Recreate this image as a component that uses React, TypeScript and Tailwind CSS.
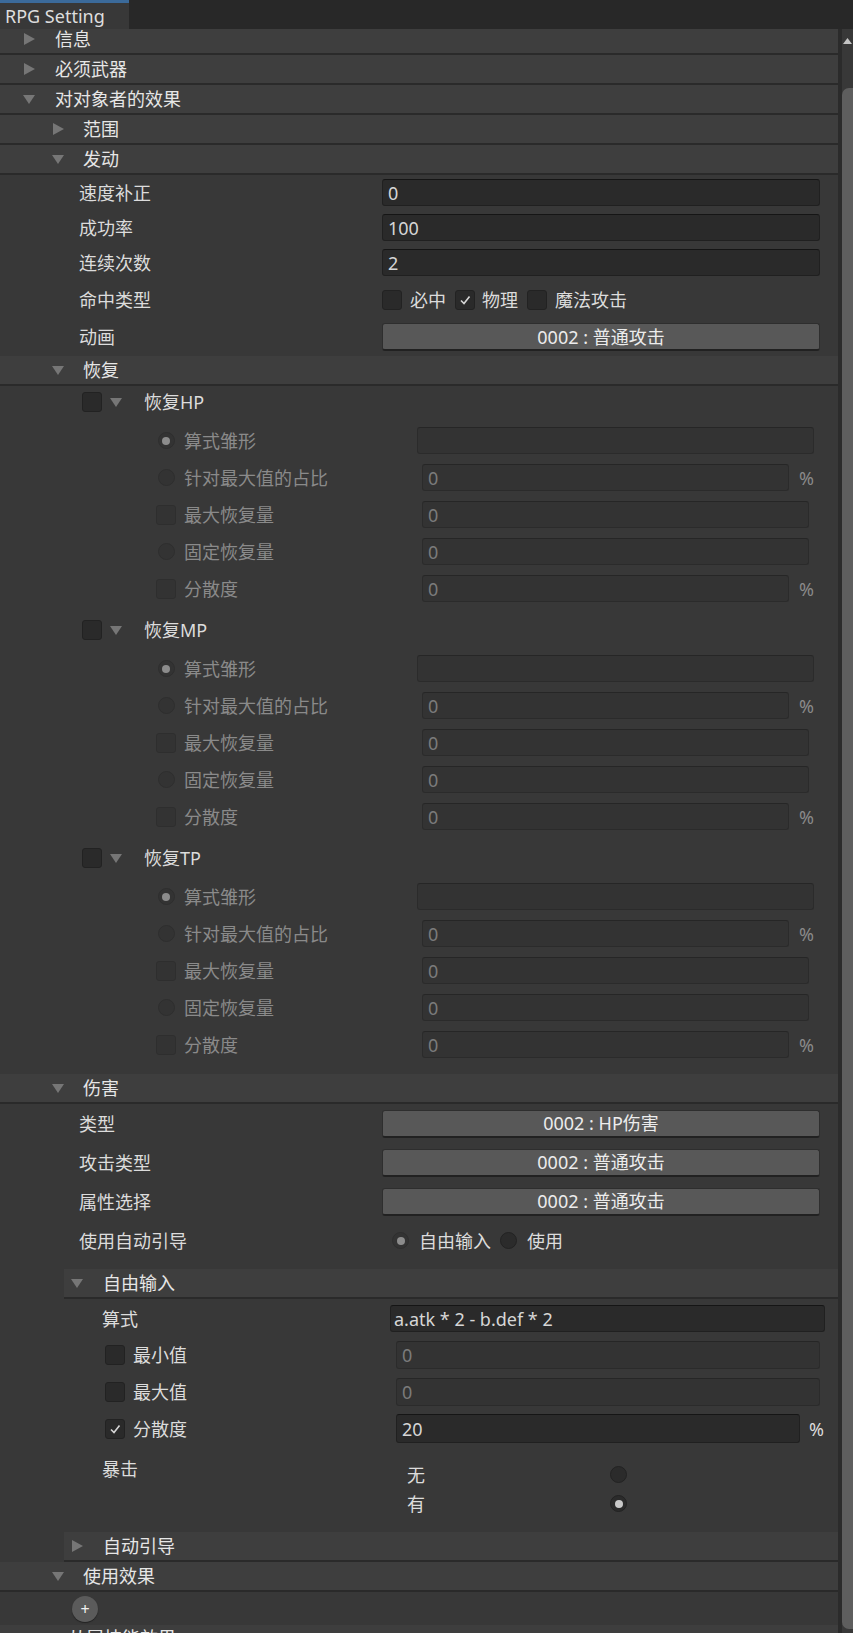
import React from 'react'

const Tri = ({ open }: { open?: boolean }) => (
  <svg width="12" height="12" viewBox="0 0 12 12" className="shrink-0">
    {open ? <polygon points="0,2 12,2 6,11" fill="#767676" /> : <polygon points="1,0 12,6 1,12" fill="#767676" />}
  </svg>
)

const Check = ({ checked, disabled }: { checked?: boolean; disabled?: boolean }) => (
  <div
    className={`flex h-[20px] w-[20px] shrink-0 items-center justify-center rounded-[3px] border ${
      disabled ? 'border-[#2e2e2e] bg-[#333333]' : 'border-[#222222] bg-[#2a2a2a]'
    }`}
  >
    {checked && (
      <svg width="12" height="12" viewBox="0 0 12 12">
        <path d="M2 6.5 L5 9.5 L10.5 2.5" stroke="#d6d6d6" strokeWidth="1.6" fill="none" />
      </svg>
    )}
  </div>
)

const Radio = ({ on, disabled }: { on?: boolean; disabled?: boolean }) => (
  <div
    className={`flex h-[17px] w-[17px] shrink-0 items-center justify-center rounded-full border ${
      disabled ? 'border-[#2e2e2e] bg-[#333333]' : 'border-[#222222] bg-[#2b2b2b]'
    }`}
  >
    {on && <div className={`h-[8px] w-[8px] rounded-full ${disabled ? 'bg-[#8c8c8c]' : 'bg-[#c9c9c9]'}`} />}
  </div>
)

const Field = ({ value, disabled, className }: { value?: string; disabled?: boolean; className: string }) => (
  <div
    className={`flex h-[27px] items-center rounded-[3px] border pl-[5px] ${
      disabled
        ? 'border-[#2b2b2b] border-t-[#262626] bg-[#333333] text-[#7b7b7b]'
        : 'border-[#202020] border-t-[#151515] bg-[#2a2a2a] text-[#d6d6d6]'
    } ${className}`}
  >
    {value}
  </div>
)

const Btn = ({ text }: { text: string }) => (
  <div className="flex h-[28px] w-[438px] items-center justify-center rounded-[3px] border border-[#2e2e2e] border-b-2 border-b-[#212121] bg-[#585858] text-[#ececec]">
    {text}
  </div>
)

const Header = ({ title, open, pad, gap, className = '' }: { title: string; open?: boolean; pad: string; gap: string; className?: string }) => (
  <div className={`flex h-[30px] shrink-0 items-center border-b-2 border-[#2a2a2a] bg-[#3e3e3e] ${pad} ${className}`}>
    <Tri open={open} />
    <span className={`${gap} text-[#e6e6e6]`}>{title}</span>
  </div>
)

const Row = ({ label, children, h }: { label: string; children: React.ReactNode; h: string }) => (
  <div className={`flex items-center ${h}`}>
    <div className="w-[382px] shrink-0 pl-[79px] text-[#dcdcdc]">{label}</div>
    {children}
  </div>
)

const SubRow = ({ label, kind, on, children }: { label: string; kind: 'radio' | 'check'; on?: boolean; children: React.ReactNode }) => (
  <div className="flex h-[37px] items-center">
    <div className="flex w-[417px] shrink-0 items-center pl-[157px]">
      <div className="flex w-[18px] justify-center">
        {kind === 'radio' ? <Radio on={on} disabled /> : <Check disabled />}
      </div>
      <span className="ml-[9px] text-[#8a8a8a]">{label}</span>
    </div>
    {children}
  </div>
)

const Recovery = ({ name }: { name: string }) => (
  <div className="pb-[7px]">
    <div className="flex h-[32px] items-center pl-[82px]">
      <Check />
      <span className="ml-[8px]">
        <Tri open />
      </span>
      <span className="ml-[22px] text-[#dcdcdc]">恢复{name}</span>
    </div>
    <div className="pt-[4px]">
      <SubRow label="算式雏形" kind="radio" on>
        <Field disabled className="w-[397px]" />
      </SubRow>
      <SubRow label="针对最大值的占比" kind="radio">
        <Field disabled value="0" className="ml-[5px] w-[367px]" />
        <span className="ml-[10px] text-[#8a8a8a]">%</span>
      </SubRow>
      <SubRow label="最大恢复量" kind="check">
        <Field disabled value="0" className="ml-[5px] w-[387px]" />
      </SubRow>
      <SubRow label="固定恢复量" kind="radio">
        <Field disabled value="0" className="ml-[5px] w-[387px]" />
      </SubRow>
      <SubRow label="分散度" kind="check">
        <Field disabled value="0" className="ml-[5px] w-[367px]" />
        <span className="ml-[10px] text-[#8a8a8a]">%</span>
      </SubRow>
    </div>
  </div>
)

const App = () => {
  return (
    <div
      className="flex h-[1633px] w-[853px] flex-col overflow-hidden bg-[#383838] text-[18px] leading-none"
      style={{ fontFamily: '"Noto Sans", "Noto Sans CJK SC", sans-serif' }}
    >
      {/* tab bar */}
      <div className="flex h-[29px] shrink-0 bg-[#282828]">
        <div className="flex w-[129px] items-center border-t-[3px] border-[#3b6a9a] bg-[#383838] pl-[5px] text-[#dedede]">
          RPG Setting
        </div>
      </div>

      <div className="flex min-h-0 flex-1">
        {/* inspector */}
        <div className="w-[838px] overflow-hidden">
          <div className="-mt-[4px] flex flex-col">
            <Header title="信息" pad="pl-[23px]" gap="ml-[20px]" />
            <Header title="必须武器" pad="pl-[23px]" gap="ml-[20px]" />
            <Header title="对对象者的效果" open pad="pl-[23px]" gap="ml-[20px]" />
            <Header title="范围" pad="pl-[52px]" gap="ml-[19px]" />
            <Header title="发动" open pad="pl-[52px]" gap="ml-[19px]" />

            <div className="pb-[2px]">
              <Row label="速度补正" h="h-[35px]">
                <Field value="0" className="w-[438px]" />
              </Row>
              <Row label="成功率" h="h-[35px]">
                <Field value="100" className="w-[438px]" />
              </Row>
              <Row label="连续次数" h="h-[35px]">
                <Field value="2" className="w-[438px]" />
              </Row>
              <Row label="命中类型" h="h-[40px]">
                <div className="flex items-center text-[#dcdcdc]">
                  <Check />
                  <span className="ml-[8px]">必中</span>
                  <span className="ml-[9px]">
                    <Check checked />
                  </span>
                  <span className="ml-[7px]">物理</span>
                  <span className="ml-[9px]">
                    <Check />
                  </span>
                  <span className="ml-[8px]">魔法攻击</span>
                </div>
              </Row>
              <Row label="动画" h="h-[34px]">
                <Btn text="0002 : 普通攻击" />
              </Row>
            </div>

            <Header title="恢复" open pad="pl-[52px]" gap="ml-[19px]" />
            <div className="pb-[4px]">
              <Recovery name="HP" />
              <Recovery name="MP" />
              <Recovery name="TP" />
            </div>

            <Header title="伤害" open pad="pl-[52px]" gap="ml-[19px]" />
            <div className="pb-[9px]">
              <Row label="类型" h="h-[39px]">
                <Btn text="0002 : HP伤害" />
              </Row>
              <Row label="攻击类型" h="h-[39px]">
                <Btn text="0002 : 普通攻击" />
              </Row>
              <Row label="属性选择" h="h-[39px]">
                <Btn text="0002 : 普通攻击" />
              </Row>
              <Row label="使用自动引导" h="h-[39px]">
                <div className="ml-[10px] flex items-center text-[#dcdcdc]">
                  <Radio on disabled />
                  <span className="ml-[10px]">自由输入</span>
                  <span className="ml-[9px]">
                    <Radio />
                  </span>
                  <span className="ml-[10px]">使用</span>
                </div>
              </Row>
            </div>

            <Header title="自由输入" open pad="pl-[7px]" gap="ml-[20px]" className="ml-[64px]" />
            <div className="text-[#dcdcdc]">
              <div className="flex h-[37px] items-center pt-[2px]">
                <div className="w-[390px] shrink-0 pl-[102px]">算式</div>
                <Field value="a.atk * 2 - b.def * 2" className="w-[435px] !pl-[3px]" />
              </div>
              <div className="flex h-[37px] items-center">
                <div className="flex w-[396px] shrink-0 items-center pl-[105px]">
                  <Check />
                  <span className="ml-[8px]">最小值</span>
                </div>
                <Field disabled value="0" className="h-[28px] w-[424px]" />
              </div>
              <div className="flex h-[37px] items-center">
                <div className="flex w-[396px] shrink-0 items-center pl-[105px]">
                  <Check />
                  <span className="ml-[8px]">最大值</span>
                </div>
                <Field disabled value="0" className="h-[28px] w-[424px]" />
              </div>
              <div className="flex h-[37px] items-center">
                <div className="flex w-[396px] shrink-0 items-center pl-[105px]">
                  <Check checked />
                  <span className="ml-[8px]">分散度</span>
                </div>
                <Field value="20" className="h-[29px] w-[404px]" />
                <span className="ml-[9px]">%</span>
              </div>
              <div className="flex h-[85px] items-start pt-[10px]">
                <div className="flex h-[24px] w-[407px] shrink-0 items-center pl-[102px]">暴击</div>
                <div className="mt-[3px] flex flex-col">
                  <div className="flex h-[29px] items-center">
                    <span className="w-[203px]">无</span>
                    <Radio />
                  </div>
                  <div className="flex h-[29px] items-center">
                    <span className="w-[203px]">有</span>
                    <Radio on />
                  </div>
                </div>
              </div>
            </div>

            <Header title="自动引导" pad="pl-[7px]" gap="ml-[20px]" className="ml-[64px]" />
            <Header title="使用效果" open pad="pl-[52px]" gap="ml-[19px]" />
            <div className="flex h-[33px] items-center pl-[72px]">
              <div className="flex h-[26px] w-[26px] items-center justify-center rounded-full bg-[#5b5b5b] text-[16px] text-[#f0f0f0] shadow-[0_1px_1px_#222222]">
                +
              </div>
            </div>
            <div className="flex h-[30px] items-start bg-[#3e3e3e] pl-[68px] pt-[4px] text-[#e6e6e6]">
              从属技能效果
            </div>
          </div>
        </div>

        {/* scrollbar */}
        <div className="flex w-[15px] shrink-0 flex-col border-l-4 border-[#2b2b2b] bg-[#383838]">
          <div className="flex h-[59px] shrink-0 justify-center pt-[9px]">
            <svg width="9" height="6" viewBox="0 0 9 6">
              <polygon points="4.5,0 9,6 0,6" fill="#c4c4c4" />
            </svg>
          </div>
          <div className="mb-[4px] flex-1 rounded-l-[7px] bg-[#5e5e5e]" />
        </div>
      </div>
    </div>
  )
}

export default App
